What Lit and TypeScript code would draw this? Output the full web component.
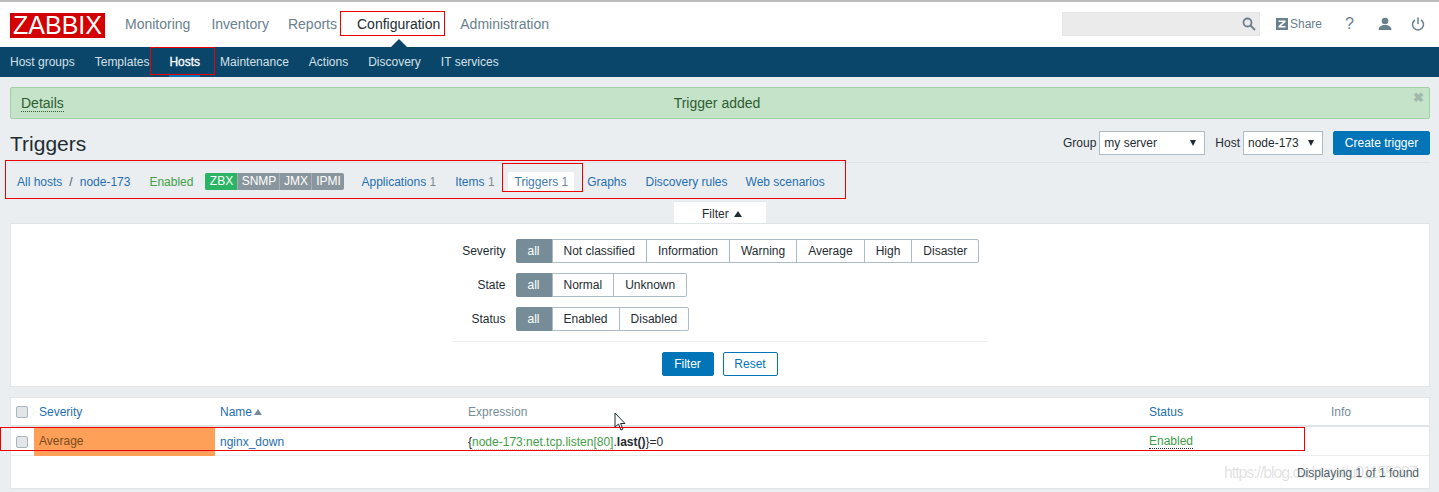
import { LitElement, html, css } from "lit";
import { customElement } from "lit/decorators.js";

const seg = (items: string[]) => html`<div class="seg">${items.map((t, i) => html`<span class=${i === 0 ? "on" : ""}>${t}</span>`)}</div>`;

@customElement("app-root")
export class AppRoot extends LitElement {
  static styles = css`
    :host { display: block; position: relative; width: 1439px; height: 492px; overflow: hidden; background: #ebeef0; font: 12px/14px "Liberation Sans", Arial, sans-serif; color: #1f2c33; }
    * { box-sizing: border-box; }
    .top { height: 47px; background: #fff; border-top: 2px solid #bbb; display: flex; align-items: center; padding: 0 10px; }
    .logo { width: 95px; height: 25px; margin-top: 1px; background: #d40000; color: #fff; font-size: 25px; line-height: 25px; text-align: center; flex: none; }
    .main { display: flex; margin-left: 20px; gap: 20px; font-size: 14px; color: #69808d; margin-top: -1px; }
    .main .mon { margin-right: 1px; }
    .main .inv { margin-right: -1px; }
    .main .act { color: #1f2c33; }
    .right { margin-left: auto; display: flex; align-items: center; color: #69808d; margin-top: -1px; }
    .search { width: 198px; height: 24px; background: #ebebeb; border: 1px solid #e6e6e6; margin-right: 16px; display: flex; align-items: center; justify-content: flex-end; padding-right: 3px; }
    .share { display: flex; align-items: center; gap: 2px; width: 47px; margin-right: 15px; }
    .q { font-size: 16px; width: 40px; text-align: center; padding-right: 17px; }
    .ico { display: block; }
    .user { margin-right: 19px; }
    .power { margin-right: 4px; }
    .sub { height: 30px; background: #0a466a; display: flex; align-items: center; padding-left: 10px; gap: 20px; color: #d5e0e6; position: relative; }
    .sub .act { color: #fff; -webkit-text-stroke: 0.3px #fff; position: relative; }
    .sub .act::after { content: ""; position: absolute; left: 0; right: 0; bottom: -8px; height: 2px; background: #0275b8; }
    .caret { position: absolute; left: 391px; top: -8px; width: 0; height: 0; border: 8px solid transparent; border-top: 0; border-bottom: 8px solid #0a466a; }
    .msg { margin: 10px 9px 0 10px; height: 32px; background: #c5e3c8; border: 1px solid #9ed2a1; border-radius: 2px; display: flex; align-items: center; position: relative; padding: 0 10px; font-size: 14px; color: #2f5d33; }
    .msg .d { border-bottom: 1px dotted #2f5d33; line-height: 15px; position: relative; margin-top: 1px; }
    .msg .c { position: absolute; left: 0; right: 6px; text-align: center; }
    .msg .x { position: absolute; right: 5px; top: 3px; color: #9fb9ad; font-size: 13px; font-weight: bold; line-height: 14px; }
    .head { margin: 0 9px 0 10px; height: 44px; display: flex; align-items: center; padding-top: 6px; border-bottom: 1px solid #dfe4e7; }
    h1 { margin: 0; font-size: 21px; line-height: 24px; font-weight: normal; color: #1f2c33; }
    .ctl { margin-left: auto; display: flex; align-items: center; margin-top: -1px; }
    .hostl { margin-left: 10px; }
    .sel { height: 24px; background: #fff; border: 1px solid #acbbc4; margin-left: 3px; padding-left: 4px; line-height: 22px; position: relative; color: #1f2c33; }
    .sel::after { content: ""; position: absolute; right: 8px; top: 8px; border: 3px solid transparent; border-top: 6px solid #1f2c33; border-bottom: 0; }
    .sel.g { width: 106px; }
    .sel.h { width: 80px; }
    .b { background: #0275b8; color: #fff; border: 1px solid #0275b8; height: 24px; border-radius: 2px; display: flex; align-items: center; justify-content: center; }
    .create { width: 97px; margin-left: 10px; }
    .hostnav { height: 36px; margin: 0 9px 0 17px; padding-top: 1px; display: flex; align-items: center; color: #1f6fb0; }
    .slash { margin: 0 7px; color: #4a5c66; }
    .gr { color: #429e47; }
    .en0 { margin-left: 19px; }
    .ml { margin-left: 19px; }
    .ml2 { margin-left: 18px; }
    .n { color: #768d99; }
    .tag { display: flex; height: 17px; margin-left: 12px; margin-right: 17px; border-radius: 2px; overflow: hidden; color: #fff; line-height: 17px; background: #8a969d; }
    .tag span { text-align: center; border-left: 1px solid #a4aeb4; }
    .tag .z { background: #2ab464; border: 0; width: 32px; }
    .tag .s { width: 42px; }
    .tag .j { width: 32px; }
    .tag .i { width: 33px; }
    .tabon { background: #fff; height: 20px; line-height: 20px; padding: 0 6px 0 7px; margin: 0 13px; border-radius: 2px 2px 0 0; color: #3f79aa; }
    .tabon .n { color: #768d99; }
    .filtertab { margin: 2px 673px 0 674px; height: 22px; background: #fff; line-height: 24px; text-align: center; padding-left: 4px; border-top: 1px solid #e6e9eb; }
    .filtertab i { display: inline-block; border: 4px solid transparent; border-bottom: 6px solid #1f2c33; border-top: 0; margin-left: 2px; vertical-align: 1px; }
    .filter { margin: 0 9px 0 10px; height: 164px; background: #fff; border: 1px solid #e2e6e9; border-top: 1px solid #dfe4e7; padding-top: 15px; display: flex; flex-direction: column; align-items: center; }
    .fwrap { width: 536px; margin-left: -1px; }
    .frow { display: flex; align-items: center; height: 24px; margin-bottom: 10px; }
    .frow label { width: 54px; text-align: right; margin-right: 10px; }
    .seg { display: flex; height: 24px; border: 1px solid #acbbc4; border-radius: 2px; background: #fff; }
    .seg span { padding: 0 11px; line-height: 22px; border-left: 1px solid #acbbc4; }
    .seg span:first-child { border-left: 0; }
    .seg .on { background: #768d99; color: #fff; padding: 0; text-align: center; margin: -1px 0 -1px -1px; line-height: 24px; width: 36px; border-radius: 2px 0 0 2px; }
    .btns { width: 536px; margin-left: -1px; border-top: 1px solid #ebeef0; padding-top: 10px; display: flex; justify-content: center; gap: 9px; }
    .btns .b { width: 52px; }
    .btns .b.r { width: 55px; background: #fff; color: #0275b8; }
    .table { margin: 10px 9px 0 10px; height: 92px; background: #fff; border: 1px solid #e2e6e9; position: relative; }
    .tr { display: grid; grid-template-columns: 23px 181px 248px 681px 182px 1fr; align-items: center; }
    .tr > div { padding-left: 5px; }
    .thead { height: 29px; border-bottom: 2px solid #dfe4e7; color: #1f6fb0; }
    .thead .g { color: #768d99; }
    .tbody { height: 29px; border-bottom: 1px solid #ebeef0; }
    .box { display: block; width: 12px; height: 12px; background: #e2e6e8; border: 1px solid #a9b5bc; border-radius: 2px; }
    .tr > .sev { background: #ffa059; height: 29px; line-height: 28px; color: #7a4a1e; }
    .link { color: #1f6fb0; }
    .up { display: inline-block; border: 4px solid transparent; border-bottom: 6px solid #768d99; border-top: 0; margin-left: 2px; vertical-align: 1px; }
    .cmp { border-bottom: 1px dotted #c7d8c8; }
    .en { color: #429e47; border-bottom: 1px dotted #1f2c33; display: inline-block; line-height: 14px; }
    .foot { text-align: right; padding: 10px 10px 0 0; color: #4a5c66; }
    .rbox { position: absolute; border: 1px solid #ee0000; pointer-events: none; }
    .wm { position: absolute; left: 1224px; top: 463px; font-size: 16px; line-height: 20px; letter-spacing: -1.1px; color: rgba(150,150,150,.28); white-space: nowrap; }
    .cursor { position: absolute; left: 614px; top: 412px; }
    .r1 { left: 340px; top: 11px; width: 105px; height: 25px; }
    .r2 { left: 150px; top: 47px; width: 65px; height: 28px; }
    .r3 { left: 5px; top: 160px; width: 841px; height: 39px; }
    .r4 { left: 502px; top: 163px; width: 81px; height: 29px; }
    .r5 { left: 0; top: 427px; width: 1305px; height: 24px; }
  `;

  render() {
    return html`
      <div class="top">
        <div class="logo">ZABBIX</div>
        <div class="main"><span class="mon">Monitoring</span><span class="inv">Inventory</span><span>Reports</span><span class="act">Configuration</span><span>Administration</span></div>
        <div class="right">
          <div class="search">
            <svg class="ico" width="14" height="14" viewBox="0 0 14 14" fill="none" stroke="#69808d" stroke-width="1.8"><circle cx="5.5" cy="5.5" r="4"/><path d="M8.5 8.5l4.500 4.500"/></svg>
          </div>
          <div class="share">
            <svg class="ico" width="12" height="12" viewBox="0 0 12 12"><rect width="12" height="12" fill="#69808d"/><path d="M2.500 2.500h7v1.600L5 8h4.500v1.500h-7V8L7 4H2.500z" fill="#fff"/></svg>
            <span>Share</span>
          </div>
          <div class="q">?</div>
          <svg class="ico user" width="14" height="14" viewBox="0 0 14 14" fill="#69808d"><circle cx="7" cy="4" r="3.300"/><path d="M0.500 13c0-3.500 3-5 6.500-5s6.500 1.500 6.500 5z"/></svg>
          <svg class="ico power" width="14" height="14" viewBox="0 0 14 14" fill="none" stroke="#69808d" stroke-width="1.500"><path d="M4 2.800a5.500 5.500 0 1 0 6 0"/><path d="M7 0.500v6.500"/></svg>
        </div>
      </div>
      <div class="sub">
        <div class="caret"></div>
        <span>Host groups</span><span>Templates</span><span class="act">Hosts</span><span>Maintenance</span><span>Actions</span><span>Discovery</span><span>IT services</span>
      </div>
      <div class="msg"><span class="c">Trigger added</span><span class="d">Details</span><span class="x">✖</span></div>
      <div class="head">
        <h1>Triggers</h1>
        <div class="ctl">
          <span>Group</span><div class="sel g">my server</div>
          <span class="hostl">Host</span><div class="sel h">node-173</div>
          <div class="b create">Create trigger</div>
        </div>
      </div>
      <div class="hostnav">
        <span>All hosts</span><span class="slash">/</span><span>node-173</span>
        <span class="gr en0">Enabled</span>
        <div class="tag"><span class="z">ZBX</span><span class="s">SNMP</span><span class="j">JMX</span><span class="i">IPMI</span></div>
        <span>Applications <span class="n">1</span></span>
        <span class="ml">Items <span class="n">1</span></span>
        <span class="tabon">Triggers <span class="n">1</span></span>
        <span>Graphs</span><span class="ml">Discovery rules</span><span class="ml2">Web scenarios</span>
      </div>
      <div class="filtertab">Filter <i></i></div>
      <div class="filter">
        <div class="fwrap">
          <div class="frow"><label>Severity</label>${seg(["all", "Not classified", "Information", "Warning", "Average", "High", "Disaster"])}</div>
          <div class="frow"><label>State</label>${seg(["all", "Normal", "Unknown"])}</div>
          <div class="frow"><label>Status</label>${seg(["all", "Enabled", "Disabled"])}</div>
        </div>
        <div class="btns"><div class="b">Filter</div><div class="b r">Reset</div></div>
      </div>
      <div class="table">
        <div class="tr thead">
          <div><span class="box"></span></div><div>Severity</div><div>Name<i class="up"></i></div><div class="g">Expression</div><div>Status</div><div class="g">Info</div>
        </div>
        <div class="tr tbody">
          <div><span class="box"></span></div><div class="sev">Average</div><div class="link">nginx_down</div>
          <div>{<span class="gr cmp">node-173:net.tcp.listen[80]</span>.<b>last()</b>}=0</div>
          <div><span class="en">Enabled</span></div><div></div>
        </div>
        <div class="foot">Displaying 1 of 1 found</div>
      </div>
      <div class="wm">https://blog.csdn.net/u01155087</div>
      <svg class="cursor" width="14" height="20" viewBox="0 0 14 20"><path d="M1 1v14l3.500-3 2.500 6 2-1-2.500-5.500h4.500z" fill="#fff" stroke="#1f2c33"/></svg>
      <div class="rbox r1"></div>
      <div class="rbox r2"></div>
      <div class="rbox r3"></div>
      <div class="rbox r4"></div>
      <div class="rbox r5"></div>
    `;
  }
}
